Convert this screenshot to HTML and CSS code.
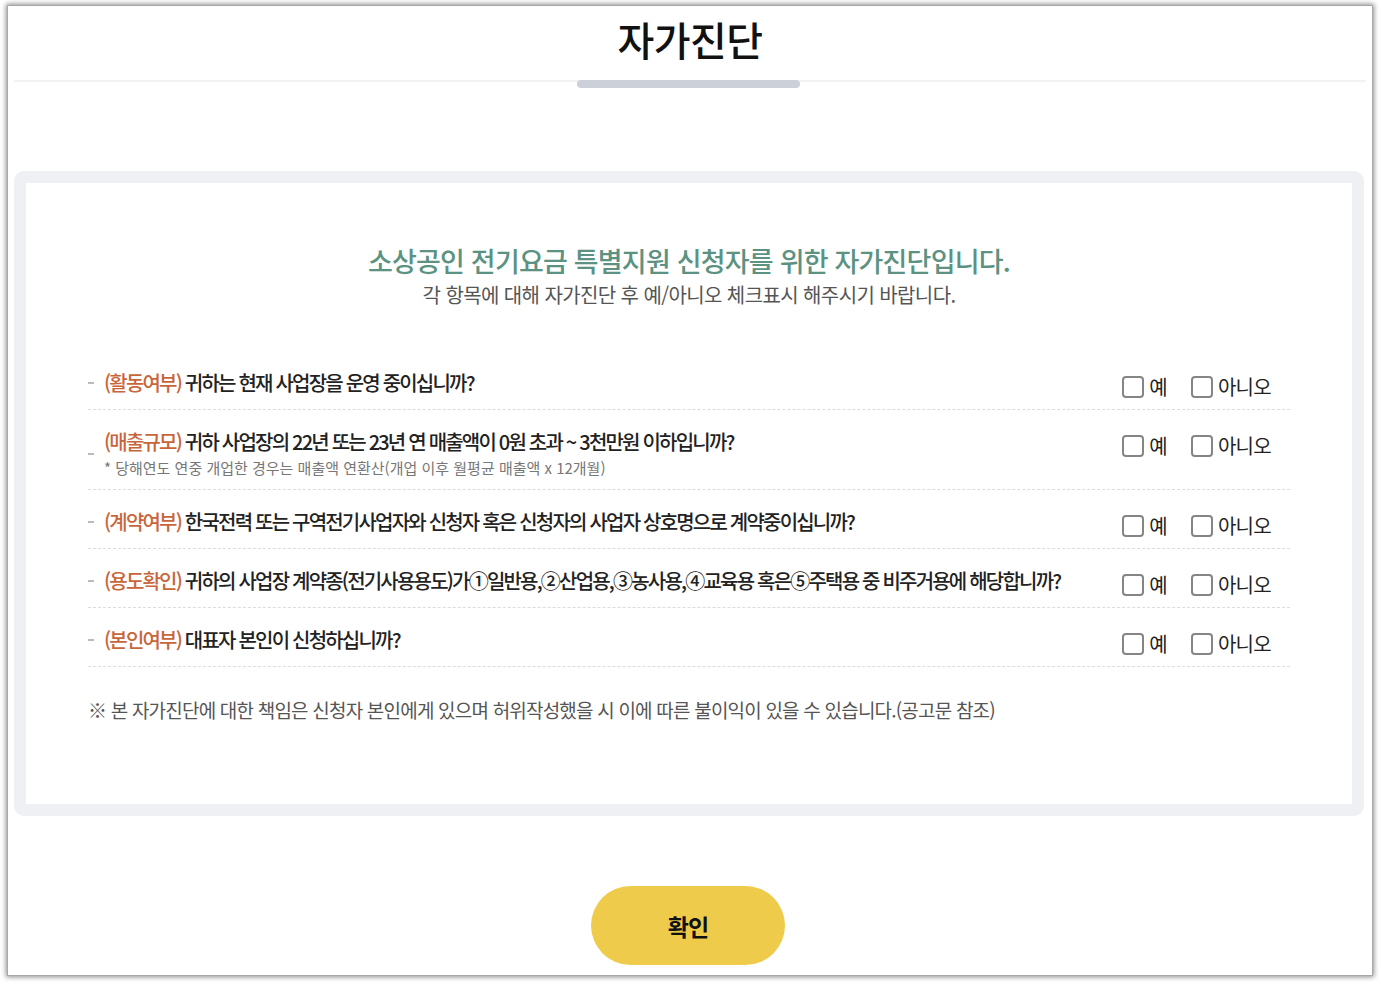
FILE: index.html
```html
<!DOCTYPE html>
<html lang="ko">
<head>
    <meta charset="utf-8">
    <title>자가진단</title>
    <link rel="stylesheet" href="styles.css">
</head>
<body>
    <div class="frame">
        <div class="head">
            <h1 class="title">자가진단</h1>
        </div>
        <div class="head-line"><span class="head-bar"></span></div>

        <div class="box">
            <div class="box-inner">
                <h2 class="lead">소상공인 전기요금 특별지원 신청자를 위한 자가진단입니다.</h2>
                <p class="lead-sub">각 항목에 대해 자가진단 후 예/아니오 체크표시 해주시기 바랍니다.</p>

                <ul class="check-list">
                    <li class="row">
                        <div class="q">
                            <span class="dash"></span>
                            <div class="q-body">
                                <p class="q-text"><span class="tag">(활동여부)</span> 귀하는 현재 사업장을 운영 중이십니까?</p>
                            </div>
                        </div>
                        <div class="choices">
                            <label class="choice"><input type="checkbox" name="q1y">예</label>
                            <label class="choice"><input type="checkbox" name="q1n">아니오</label>
                        </div>
                    </li>
                    <li class="row">
                        <div class="q">
                            <span class="dash"></span>
                            <div class="q-body">
                                <p class="q-text"><span class="tag">(매출규모)</span> 귀하 사업장의 22년 또는 23년 연 매출액이 0원 초과 ~ 3천만원 이하입니까?</p>
                                <p class="q-note">* 당해연도 연중 개업한 경우는 매출액 연환산(개업 이후 월평균 매출액 x 12개월)</p>
                            </div>
                        </div>
                        <div class="choices">
                            <label class="choice"><input type="checkbox" name="q2y">예</label>
                            <label class="choice"><input type="checkbox" name="q2n">아니오</label>
                        </div>
                    </li>
                    <li class="row">
                        <div class="q">
                            <span class="dash"></span>
                            <div class="q-body">
                                <p class="q-text"><span class="tag">(계약여부)</span> 한국전력 또는 구역전기사업자와 신청자 혹은 신청자의 사업자 상호명으로 계약중이십니까?</p>
                            </div>
                        </div>
                        <div class="choices">
                            <label class="choice"><input type="checkbox" name="q3y">예</label>
                            <label class="choice"><input type="checkbox" name="q3n">아니오</label>
                        </div>
                    </li>
                    <li class="row">
                        <div class="q">
                            <span class="dash"></span>
                            <div class="q-body">
                                <p class="q-text"><span class="tag">(용도확인)</span> 귀하의 사업장 계약종(전기사용용도)가①일반용,②산업용,③농사용,④교육용 혹은⑤주택용 중 비주거용에 해당합니까?</p>
                            </div>
                        </div>
                        <div class="choices">
                            <label class="choice"><input type="checkbox" name="q4y">예</label>
                            <label class="choice"><input type="checkbox" name="q4n">아니오</label>
                        </div>
                    </li>
                    <li class="row">
                        <div class="q">
                            <span class="dash"></span>
                            <div class="q-body">
                                <p class="q-text"><span class="tag">(본인여부)</span> 대표자 본인이 신청하십니까?</p>
                            </div>
                        </div>
                        <div class="choices">
                            <label class="choice"><input type="checkbox" name="q5y">예</label>
                            <label class="choice"><input type="checkbox" name="q5n">아니오</label>
                        </div>
                    </li>
                </ul>

                <p class="notice">※ 본 자가진단에 대한 책임은 신청자 본인에게 있으며 허위작성했을 시 이에 따른 불이익이 있을 수 있습니다.(공고문 참조)</p>
            </div>
        </div>

        <div class="actions">
            <button type="button" class="btn-ok">확인</button>
        </div>
    </div>
</body>
</html>
```

FILE: styles.css
```css
* {
    box-sizing: border-box;
}

html {
    background: #fff;
}

body {
    margin: 0;
    padding: 6px 9px 9px 8px;
    font-family: "Noto Sans CJK KR", "Noto Sans", sans-serif;
    color: #222;
}

.frame {
    background: #fff;
    box-shadow: 0 0 0 1px #a8a8a8, 0 0 5px 2px rgba(0, 0, 0, 0.45);
    height: 969px;
    padding-top: 5px;
}

/* header */
.head {
    text-align: center;
    margin-bottom: 13px;
}

.title {
    margin: 0;
    font-size: 40px;
    line-height: 56px;
    font-weight: 500;
    letter-spacing: -0.5px;
    color: #111;
}

.head-line {
    position: relative;
    height: 2px;
    margin: 0 6px;
    background: #f1f2f5;
}

.head-bar {
    position: absolute;
    top: 0;
    left: 50%;
    width: 223px;
    height: 8px;
    margin-left: -113px;
    border-radius: 4px;
    background: #cbd0d9;
}

/* box */
.box {
    margin: 89px 8px 0 6px;
    border: 12px solid #eff0f4;
    border-radius: 10px;
}

.box-inner {
    padding: 60px 62px 80px;
}

.lead {
    margin: 0;
    text-align: center;
    font-size: 27px;
    line-height: 36px;
    font-weight: 500;
    letter-spacing: -0.8px;
    color: #5b9282;
}

.lead-sub {
    margin: 2px 0 0;
    text-align: center;
    font-size: 20px;
    line-height: 28px;
    letter-spacing: -0.6px;
    color: #555;
}

/* list */
.check-list {
    list-style: none;
    margin: 42px 0 0;
    padding: 0;
}

.row {
    display: flex;
    align-items: flex-start;
    padding: 20px 19px 11px 0;
    border-bottom: 1px dashed #dcdcdc;
}

.q {
    flex: 1;
    display: flex;
    align-items: center;
}

.dash {
    width: 6px;
    height: 2px;
    margin-right: 10px;
    background: #bbb;
    flex-shrink: 0;
}

.q-text {
    margin: 0;
    font-size: 20px;
    line-height: 24px;
    font-weight: 500;
    letter-spacing: -1.8px;
    color: #222;
}

.tag {
    color: #c8663b;
}

.q-note {
    margin: 4px 0 0;
    font-size: 15px;
    line-height: 20px;
    letter-spacing: 0;
    color: #777;
}

.choices {
    display: flex;
    gap: 24px;
    margin-top: 5px;
}

.choice {
    display: flex;
    align-items: center;
    gap: 5px;
    font-size: 20px;
    line-height: 22px;
    letter-spacing: -0.7px;
    color: #222;
}

.choice input {
    appearance: none;
    -webkit-appearance: none;
    width: 22px;
    height: 22px;
    margin: 0;
    border: 2px solid #858585;
    border-radius: 4px;
    background: #fff;
}

.notice {
    margin: 29px 0 0;
    font-size: 19px;
    line-height: 28px;
    letter-spacing: -0.8px;
    color: #555;
}

/* button */
.actions {
    display: flex;
    justify-content: center;
    margin-top: 70px;
    padding-right: 4px;
}

.btn-ok {
    width: 194px;
    height: 79px;
    border: none;
    border-radius: 40px;
    background: #efcb4b;
    font-family: inherit;
    font-size: 23px;
    font-weight: 700;
    letter-spacing: -1px;
    color: #111;
    cursor: pointer;
}
```
